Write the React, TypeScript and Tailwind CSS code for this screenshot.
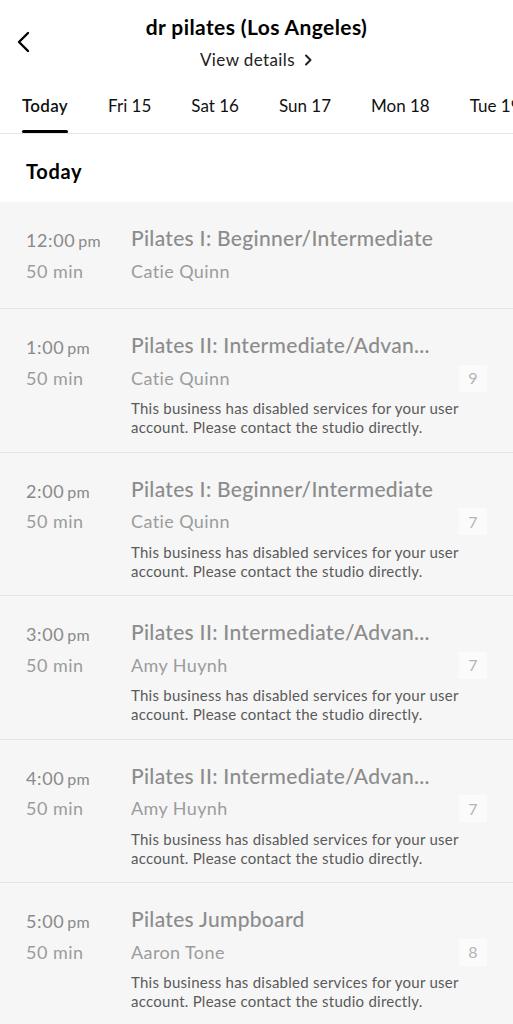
import React from 'react';

type ClassItem = {
  time: string;
  title: string;
  teacher: string;
  spots?: number;
};

const classes: ClassItem[] = [
  { time: '12:00', title: 'Pilates I: Beginner/Intermediate', teacher: 'Catie Quinn' },
  { time: '1:00', title: 'Pilates II: Intermediate/Advan...', teacher: 'Catie Quinn', spots: 9 },
  { time: '2:00', title: 'Pilates I: Beginner/Intermediate', teacher: 'Catie Quinn', spots: 7 },
  { time: '3:00', title: 'Pilates II: Intermediate/Advan...', teacher: 'Amy Huynh', spots: 7 },
  { time: '4:00', title: 'Pilates II: Intermediate/Advan...', teacher: 'Amy Huynh', spots: 7 },
  { time: '5:00', title: 'Pilates Jumpboard', teacher: 'Aaron Tone', spots: 8 },
];

const tabs = ['Today', 'Fri 15', 'Sat 16', 'Sun 17', 'Mon 18', 'Tue 19'];

const App: React.FC = () => {
  return (
    <div
      className="w-[513px] h-[1024px] overflow-hidden bg-white text-black"
      style={{ fontFamily: 'Lato, "Noto Sans", sans-serif' }}
    >
      {/* header */}
      <div className="relative h-[78px] flex flex-col items-center pt-[12px]">
        <button className="absolute left-[14px] top-[30px] text-black">
          <svg width="22" height="24" viewBox="0 0 22 24" fill="none" stroke="currentColor" strokeWidth="2.4" strokeLinecap="round" strokeLinejoin="round">
            <path d="M14 3 L5 12 L14 21" />
          </svg>
        </button>
        <h1 className="text-[21px] leading-[30px] font-bold tracking-[0.4px]">dr pilates (Los Angeles)</h1>
        <div className="flex items-center gap-[8px] text-[17px] leading-[22px] tracking-[0.4px] text-[#222] mt-[7px]">
          View details
          <svg width="10" height="12" viewBox="0 0 10 12" fill="none" stroke="currentColor" strokeWidth="2" strokeLinecap="round" strokeLinejoin="round">
            <path d="M3 1.5 L7.5 6 L3 10.5" />
          </svg>
        </div>
      </div>

      {/* date tabs */}
      <div className="flex gap-[40px] pl-[22px] h-[56px] border-b border-[#e6e6e6] whitespace-nowrap overflow-hidden">
        {tabs.map((t, i) => (
          <div key={t} className="relative shrink-0 flex items-center text-[17px] text-[#111]">
            <span className={i === 0 ? 'font-semibold tracking-[0.3px]' : ''}>{t}</span>
            {i === 0 && <div className="absolute left-0 right-0 bottom-0 h-[3px] rounded-full bg-black" />}
          </div>
        ))}
      </div>

      {/* section header */}
      <div className="h-[68px] flex items-center pl-[26px] pt-[6px]">
        <h2 className="text-[20px] font-bold tracking-[0.7px]">Today</h2>
      </div>

      {/* class list */}
      <div className="flex flex-col bg-[#f6f6f6]">
        {classes.map((c, i) => (
          <div
            key={i}
            className={`flex px-[26px] border-b border-[#e4e4e4] ${c.spots ? 'pt-[24px] pb-[14.5px]' : 'pt-[24px] pb-[25px]'}`}
          >
            <div className="w-[105px] shrink-0">
              <div className="h-[24px] flex items-baseline pt-[1px] text-[#8a8a8a] text-[18px] tracking-[0.6px]">
                {c.time}
                <span className="text-[16px] ml-[3px] tracking-[0.2px]">pm</span>
              </div>
              <div className="h-[24px] mt-[9px] flex items-center text-[#9c9c9c] text-[18px] tracking-[0.5px]">50 min</div>
            </div>
            <div className="flex-1 min-w-0">
              <div className="h-[24px] flex items-center text-[21px] tracking-[0.3px] text-[#8c8c8c] font-medium whitespace-nowrap">
                {c.title}
              </div>
              <div className="h-[24px] mt-[9px] flex items-center justify-between">
                <span className="text-[18px] tracking-[0.4px] text-[#9c9c9c]">{c.teacher}</span>
                {c.spots && (
                  <span className="w-[28px] h-[27px] flex items-center justify-center bg-[#fbfbfb] text-[16px] text-[#b5b5b5]">
                    {c.spots}
                  </span>
                )}
              </div>
              {c.spots && (
                <p className="mt-[9px] text-[15px] leading-[19px] tracking-[0.25px] text-[#5a5a5a]">
                  This business has disabled services for your user account. Please contact the studio directly.
                </p>
              )}
            </div>
          </div>
        ))}
      </div>
    </div>
  );
};

export default App;
